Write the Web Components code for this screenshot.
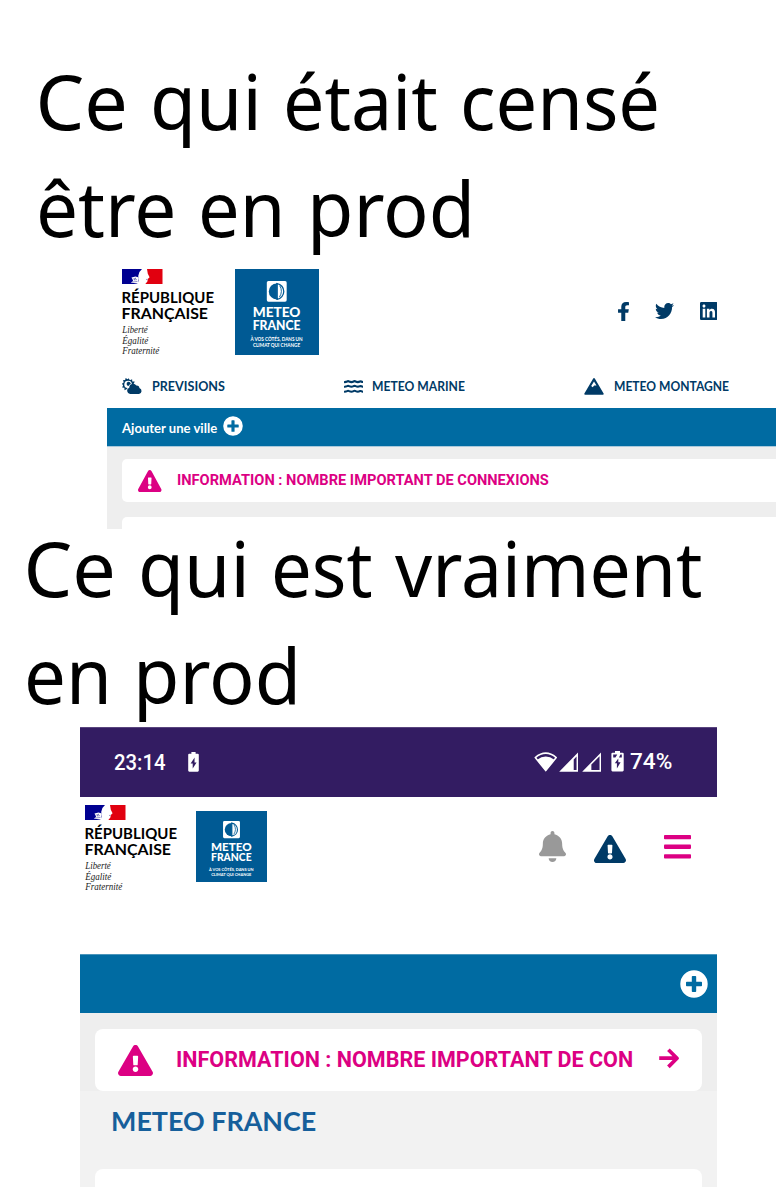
<!DOCTYPE html>
<html lang="fr">
<head>
<meta charset="utf-8">
<title>Météo France en prod</title>
<style>
html,body{margin:0;background:#fff}
body{width:776px;height:1187px;overflow:hidden;font-family:"Liberation Sans",sans-serif}
</style>
</head>
<body>
<prod-page></prod-page>
<script>
const define = (name, html, setup) => customElements.define(name, class extends HTMLElement {
  constructor() {
    super();
    const root = this.attachShadow({mode: 'open'});
    const t = document.createElement('template');
    t.innerHTML = html;
    root.append(t.content.cloneNode(true));
  }
  connectedCallback() { if (setup) setup.call(this); }
});

/* Single line of text stretched to an exact width (attribute w). */
define('fit-text', `<style>:host{display:block;flex:none;white-space:nowrap}span{display:inline-block;transform-origin:0 50%}</style><span><slot></slot></span>`,
function () {
  const s = this.shadowRoot.querySelector('span'), w = +this.getAttribute('w');
  this.style.width = w + 'px';
  s.style.transform = `scaleX(${w / s.offsetWidth})`;
});

const icons = {
  facebook: ['22 0 276 512', '<path d="M279.14 288l14.22-92.66h-88.91v-60.13c0-25.35 12.42-50.06 52.24-50.06h40.42V6.26S260.43 0 225.36 0c-73.22 0-121.08 44.38-121.08 124.72v70.62H22.89V288h81.39v224h100.17V288z"/>'],
  twitter: ['0 48 512 416', '<path d="M459.37 151.716c.325 4.548.325 9.097.325 13.645 0 138.72-105.583 298.558-298.558 298.558-59.452 0-114.68-17.219-161.137-47.106 8.447.974 16.568 1.299 25.34 1.299 49.055 0 94.213-16.568 130.274-44.832-46.132-.975-84.792-31.188-98.112-72.772 6.498.974 12.995 1.624 19.818 1.624 9.421 0 18.843-1.3 27.614-3.573-48.081-9.747-84.143-51.98-84.143-102.985v-1.299c13.969 7.797 30.214 12.67 47.431 13.319-28.264-18.843-46.781-51.005-46.781-87.391 0-19.492 5.197-37.36 14.294-52.954 51.655 63.675 129.3 105.258 216.365 109.807-1.624-7.797-2.599-15.918-2.599-24.04 0-57.828 46.782-104.934 104.934-104.934 30.213 0 57.502 12.67 76.67 33.137 23.715-4.548 46.456-13.32 66.599-25.34-7.798 24.366-24.366 44.833-46.132 57.827 21.117-2.273 41.584-8.122 60.426-16.243-14.292 20.791-32.161 39.308-52.628 54.253z"/>'],
  linkedin: ['0 32 448 448', '<path d="M416 32H31.9C14.3 32 0 46.5 0 64.3v383.4C0 465.5 14.3 480 31.9 480H416c17.6 0 32-14.5 32-32.3V64.3c0-17.8-14.4-32.3-32-32.3zM135.4 416H69V202.2h66.5V416zm-33.2-243c-21.3 0-38.5-17.3-38.5-38.5S80.9 96 102.2 96c21.2 0 38.5 17.3 38.5 38.5 0 21.3-17.2 38.5-38.5 38.5zm282.1 243h-66.4V312c0-24.8-.5-56.7-34.5-56.7-34.6 0-39.9 27-39.9 54.9V416h-66.4V202.2h63.7v29.2h.9c8.9-16.8 30.6-34.5 62.9-34.5 67.2 0 79.7 44.3 79.7 101.9V416z"/>'],
  warning: ['0 0 576 512', '<path d="M569.517 440.013C587.975 472.007 564.806 512 527.94 512H48.054c-36.937 0-59.999-40.055-41.577-71.987L246.423 23.985c18.467-32.009 64.72-31.951 83.154 0l239.94 416.028zM288 354c-25.405 0-46 20.595-46 46s20.595 46 46 46 46-20.595 46-46-20.595-46-46-46zm-43.673-165.346l7.418 136c.347 6.364 5.609 11.346 11.982 11.346h48.546c6.373 0 11.635-4.982 11.982-11.346l7.418-136c.375-6.874-5.098-12.654-11.982-12.654h-63.383c-6.884 0-12.356 5.78-11.981 12.654z"/>'],
  bell: ['0 0 448 512', '<path d="M224 512c35.32 0 63.97-28.65 63.97-64H160.03c0 35.35 28.65 64 63.97 64zm215.39-149.71c-19.32-20.76-55.47-51.99-55.47-154.29 0-77.7-54.48-139.9-127.94-155.16V32c0-17.67-14.32-32-31.98-32s-31.98 14.33-31.98 32v20.84C118.56 68.1 64.08 130.3 64.08 208c0 102.3-36.15 133.53-55.47 154.29-6 6.45-8.66 14.16-8.61 21.71.11 16.4 12.98 32 32.1 32h383.8c19.12 0 32-15.6 32.1-32 .05-7.55-2.61-15.27-8.61-21.71z"/>'],
  bars: ['0 0 27 24', '<rect width="27" height="4.3" rx=".8"/><rect y="9.6" width="27" height="4.3" rx=".8"/><rect y="19.3" width="27" height="4.3" rx=".8"/>'],
  plus: ['0 0 28 28', '<path fill-rule="evenodd" d="M14 .3a13.7 13.7 0 1 0 0 27.4A13.7 13.7 0 1 0 14 .3zM12.6 6h2.8q.8 0 .8.8v5h5q.8 0 .8.8v2.8q0 .8-.8.8h-5v5q0 .8-.8.8h-2.8q-.8 0-.8-.8v-5h-5q-.8 0-.8-.8v-2.8q0-.8.8-.8h5v-5q0-.8.8-.8z"/>'],
  arrow: ['0 0 21 21', '<path d="M1.2 10.2H18M10.4 1.7l8.6 8.6-8.6 8.6" fill="none" stroke="currentColor" stroke-width="3.7" stroke-linecap="butt" stroke-linejoin="round"/>'],
  cloudsun: ['0 0 20 17', '<path fill-rule="evenodd" d="M6.6.2l1.3 2 2.2-1 .2 2.4 2.4.1-.9 2.1-1.9.6a3.8 3.8 0 1 0-4.3 4l-1.1 1.1-2 1.1-.1-2.5-2.3-.3 1-2.2L0 5.9l1.8-1.4-.9-2.2 2.3-.2L3.6 0l2 1.2z"/><path d="M6 3.9a2.7 2.7 0 0 1 2.9 1.9c-1.2.4-1.9 1.3-2.3 2.5A2.3 2.3 0 0 1 6 3.9z"/><path d="M8.1 16.4a3.3 3.3 0 0 1-.8-6.4 3.8 3.8 0 0 1 7-2.2 2.6 2.6 0 0 1 3.1 2.6 3.1 3.1 0 0 1-.4 6z"/>'],
  waves: ['0 0 19 14', '<path d="M.6 2.1q1.4 0 2.4-.6 1.1-.7 2.2 0 1.1.6 2.2.6t2.1-.6q1.1-.7 2.2 0 1.1.6 2.1.6t2.1-.6q1.2-.3 2.5.5M.6 6.8q1.4 0 2.4-.6 1.1-.7 2.2 0 1.1.6 2.2.6t2.1-.6q1.1-.7 2.2 0 1.1.6 2.1.6t2.1-.6q1.2-.3 2.5.5M.6 11.7q1.4 0 2.4-.6 1.1-.7 2.2 0 1.1.6 2.2.6t2.1-.6q1.1-.7 2.2 0 1.1.6 2.1.6t2.1-.6q1.2-.3 2.5.5" fill="none" stroke="currentColor" stroke-width="2.1" stroke-linecap="round"/>'],
  mountain: ['0 0 20 17', '<path fill-rule="evenodd" d="M9.2.6q.8-1.1 1.6 0l8.8 14.8q.5 1.3-.8 1.4H1.2Q-.1 16.7.4 15.4zM10 3.4L7.2 8l1.5 1.2 1.5-1.7h2.3z"/>'],
  battery: ['0 0 11 20', '<path fill-rule="evenodd" d="M3.4 0h4.2v1.7h2.1q1.1 0 1.1 1.1v15.8q0 1.1-1.1 1.1H1.3q-1.1 0-1.1-1.1V2.8q0-1.1 1.1-1.1h2.1zM6.6 5.6l-4 6h2.1v5l3.9-6.1H6.5z"/>'],
  batterylevel: ['0 0 13 20', '<path fill-rule="evenodd" d="M4 0h5v1.6h2.5Q12.7 1.6 12.7 2.8v16q0 1.1-1.2 1.1h-10Q.4 19.9.4 18.8v-16q0-1.2 1.2-1.2H4zM2.2 3.4v3h2.2l1.9-3zM9.4 3.4L8 6.4h2.8v-3zM7.3 7.3L3.8 12h2.1v5l3.7-6H7.3z"/>'],
  wifi: ['0 0 24 20', '<path d="M1.3 5.6Q12-3.2 22.7 5.6L12 18.6z" fill="none" stroke="currentColor" stroke-width="1.6" stroke-linejoin="round"/><path d="M3.2 7.7Q12 1.4 20.8 7.7L12 19z"/>'],
  signal: ['0 0 20 20', '<path fill-rule="evenodd" d="M19.7.2V19.8H.2zM18 4.6l-2.9 3V18H18z"/>'],
  signalempty: ['0 0 20 20', '<path fill-rule="evenodd" d="M19.7.2V19.8H.2zM18 4.2L9.6 12.6V18H18z"/>']
};
define('ui-icon', `<style>:host{display:block;flex:none;line-height:0}svg{display:block;width:100%;height:100%;fill:currentColor}</style><svg preserveAspectRatio="none"></svg>`,
function () {
  const [box, body] = icons[this.getAttribute('name')];
  const svg = this.shadowRoot.querySelector('svg');
  svg.setAttribute('viewBox', box);
  svg.innerHTML = body;
  this.style.width = this.getAttribute('w') + 'px';
  this.style.height = this.getAttribute('h') + 'px';
});

define('republique-logo', `<style>:host{display:block;flex:none;width:94px;height:90px}svg{display:block;overflow:visible}
.b{font:700 14.6px Lato,sans-serif}.i{font:italic 9.6px "Liberation Serif",serif;fill:#222}</style>
<svg width="94" height="90"><path fill="#000091" d="M0 0h20l-2.6 3-1.2 3.9.8 4.6-1.8 3.5H0z"/><path fill="#e1000f" d="M25 0h15.5v15H23.3l2.1-2.6.4-2.3 1.8-1.9-1.8-3.4z"/>
<path fill="#fff" d="M9.5 8.5l4-1.1 3.3 1.1-.5 6.2-7.5-1.2 2.4-1.5z"/><path d="M10 10.5l4-1.5-2 2 3-.4M10.5 13l5-.6M24 10.5l1.5-.2" fill="none" stroke="#5555a8" stroke-width=".6"/>
<text class="b" x="-.5" y="33.6" textLength="92.5" lengthAdjust="spacingAndGlyphs">RÉPUBLIQUE</text>
<text class="b" x="-.5" y="49.8" textLength="86.5" lengthAdjust="spacingAndGlyphs">FRANÇAISE</text>
<text class="i" x=".3" y="64.3" textLength="25.5" lengthAdjust="spacingAndGlyphs">Liberté</text>
<text class="i" x=".3" y="74.8" textLength="26" lengthAdjust="spacingAndGlyphs">Égalité</text>
<text class="i" x=".3" y="84.9" textLength="37" lengthAdjust="spacingAndGlyphs">Fraternité</text></svg>`);

define('meteo-logo', `<style>:host{display:block;flex:none}svg{display:block;width:100%;height:100%;fill:#fff;background:#005a94}
.b{font:900 12.4px Lato,sans-serif}.s{font:700 5px Lato,sans-serif}</style>
<svg viewBox="0 0 84 85" preserveAspectRatio="none"><rect x="32" y="12" width="20" height="20.5" rx="1.6"/>
<path d="M42 14.3a8 8 0 0 0 0 16" fill="#005a94"/><path d="M42.4 14.5a7.9 7.9 0 0 1 0 15.6z" fill="#fff" stroke="#005a94" stroke-width="1.3"/><path d="M45 16.5q3.5 5.7-.3 11.5" fill="none" stroke="#005a94" stroke-width=".9"/><path d="M42 30.4V14" stroke="#005a94" stroke-width="1"/>
<text class="b" x="17.8" y="47.6" textLength="48" lengthAdjust="spacingAndGlyphs">METEO</text>
<text class="b" x="17.8" y="60.4" textLength="48" lengthAdjust="spacingAndGlyphs">FRANCE</text>
<text class="s" x="15.5" y="71.3" textLength="52.5" lengthAdjust="spacingAndGlyphs">À VOS CÔTÉS, DANS UN</text>
<text class="s" x="18" y="77.5" textLength="47.5" lengthAdjust="spacingAndGlyphs">CLIMAT QUI CHANGE</text></svg>`);

define('big-title', `<style>:host{display:block;box-sizing:border-box;height:214px;font:400 77.3px/107px "Noto Sans","Open Sans",sans-serif;color:#000}</style><slot></slot>`);

define('title-line', `<style>:host{display:flex;height:107px;gap:22px}</style><slot></slot>`);

define('nav-item', `<style>:host{display:flex;align-items:center;color:#003a66;font:700 12.4px/18px Lato,sans-serif}</style><slot></slot>`);

define('info-card', `<style>:host{display:flex;box-sizing:border-box;align-items:center;background:#fff;color:#dc0083;font-family:Roboto,sans-serif;font-weight:700}</style><slot></slot>`);

define('desktop-site', `<style>
:host{display:block;margin-left:107px;height:269px}
header{display:flex;height:109px;box-sizing:border-box;padding:9px 0 0 15px;color:#003a66}
meteo-logo{width:83.5px;height:85.5px;margin-left:19px}
.social{display:flex;align-items:center;height:85px;margin-left:299px}
.social ui-icon{margin-top:-1px}
.social ui-icon+ui-icon{margin-left:26px}
nav{display:grid;grid-template-columns:221.5px 240.5px 1fr;height:39px;padding:0 0 0 15px;box-sizing:border-box}
nav-item{height:35px}
.bar{display:flex;align-items:center;height:38px;padding-left:15px;background:#006ba2;color:#fff;font:700 12.8px/18px Lato,sans-serif}
main{height:83px;box-sizing:border-box;border-top:1px solid #a9c9dc;padding:12px 0 0 15px;background:#eee;overflow:hidden}
info-card{height:43px;padding-left:16px;border-radius:5px 0 0 5px;font-size:15px;line-height:18px}
info-card+info-card{margin-top:15px}
</style>
<header><republique-logo></republique-logo><meteo-logo></meteo-logo>
<div class="social"><ui-icon name="facebook" w="11" h="19"></ui-icon><ui-icon name="twitter" w="19" h="16"></ui-icon><ui-icon name="linkedin" w="17.5" h="18"></ui-icon></div></header>
<nav><nav-item><ui-icon name="cloudsun" w="20" h="16.5"></ui-icon><fit-text w="73" style="margin-left:9.5px;margin-top:1px">PREVISIONS</fit-text></nav-item>
<nav-item><ui-icon name="waves" w="19" h="14"></ui-icon><fit-text w="93" style="margin-left:9px;margin-top:1px">METEO MARINE</fit-text></nav-item>
<nav-item><ui-icon name="mountain" w="20" h="17"></ui-icon><fit-text w="115" style="margin-left:9.5px;margin-top:1px">METEO MONTAGNE</fit-text></nav-item></nav>
<div class="bar"><fit-text w="95" style="margin-top:1px">Ajouter une ville</fit-text><ui-icon name="plus" w="20" h="20" style="margin:-2px 0 0 6px"></ui-icon></div>
<main><info-card><ui-icon name="warning" w="23.5" h="22"></ui-icon><fit-text w="371.5" style="margin:-1px 0 0 15px">INFORMATION : NOMBRE IMPORTANT DE CONNEXIONS</fit-text></info-card><info-card></info-card></main>`);

define('status-bar', `<style>:host{display:flex;align-items:center;height:70px;padding:0 45.5px 0 34px;box-sizing:border-box;background:#331c62;color:#fff;font:500 21.5px/26px Roboto,sans-serif;border-top:1px solid #59457e}
ui-icon{margin-top:-1px}
.right{display:flex;align-items:center;margin:-1px 0 0 auto}</style>
<fit-text w="52">23:14</fit-text><ui-icon name="battery" w="11" h="20" style="margin-left:22px"></ui-icon>
<div class="right"><ui-icon name="wifi" w="23.5" h="20"></ui-icon><ui-icon name="signal" w="19.5" h="20" style="margin-left:1.5px"></ui-icon><ui-icon name="signalempty" w="19.5" h="20" style="margin-left:3.5px"></ui-icon><ui-icon name="batterylevel" w="13" h="20.5" style="margin-left:10px"></ui-icon><fit-text w="42" style="margin-left:5.5px">74%</fit-text></div>`);

define('phone-site', `<style>
:host{display:block;width:637px;height:460px;margin-left:80px;overflow:hidden}
header{display:flex;height:157px;box-sizing:border-box;padding:7.5px 0 0 4.5px}
meteo-logo{width:71px;height:71px;margin:6px 0 0 17.5px}
.tools{display:flex;align-items:flex-start;margin:26px 26px 0 auto}
.bar{display:flex;align-items:center;justify-content:flex-end;box-sizing:border-box;height:59px;padding-right:9px;border-top:1px solid #4b95bb;background:#006ba2;color:#fff}
.alert{height:78px;box-sizing:border-box;padding:16px 15px 0;background:#eee}
info-card{height:62px;border-radius:8px;padding:0 23px 0 23px;font-size:21.5px;line-height:26px}
main{height:96px;background:#f2f2f2;padding:0 15px;box-sizing:border-box}
h2{margin:0;height:78px;box-sizing:border-box;padding:13px 0 0 16px;font:700 26.6px/34px Lato,sans-serif;color:#165f9b}
main info-card{padding:0}
</style>
<status-bar></status-bar>
<header><republique-logo></republique-logo><meteo-logo></meteo-logo>
<div class="tools"><ui-icon name="bell" w="27" h="31" style="color:#999"></ui-icon><ui-icon name="warning" w="32" h="28" style="color:#003a66;margin:4px 0 0 28px"></ui-icon><ui-icon name="bars" w="27" h="24" style="color:#dc0083;margin:4px 0 0 38px"></ui-icon></div></header>
<div class="bar"><ui-icon name="plus" w="28" h="28"></ui-icon></div>
<div class="alert"><info-card><ui-icon name="warning" w="35" h="31"></ui-icon><fit-text w="457" style="margin-left:23px">INFORMATION : NOMBRE IMPORTANT DE CON</fit-text><ui-icon name="arrow" w="21" h="21" style="margin:-3px 0 0 auto"></ui-icon></info-card></div>
<main><h2><fit-text w="205">METEO FRANCE</fit-text></h2><info-card></info-card></main>`);

define('prod-page', `<style>:host{display:block;width:776px;height:1187px;overflow:hidden;background:#fff}
.one{margin-top:46px}.two{margin-top:-16px}
big-title{position:relative;top:1px}
.one title-line{padding-left:35.5px}.two title-line{padding-left:23.5px}
</style>
<div style="display:flow-root"><big-title class="one"><title-line><fit-text w="92">Ce</fit-text><fit-text w="111.5">qui</fit-text><fit-text w="155">était</fit-text><fit-text w="200">censé</fit-text></title-line>
<title-line><fit-text w="140">être</fit-text><fit-text w="87">en</fit-text><fit-text w="168">prod</fit-text></title-line></big-title></div>
<desktop-site></desktop-site>
<big-title class="two"><title-line><fit-text w="92">Ce</fit-text><fit-text w="111.5">qui</fit-text><fit-text w="102">est</fit-text><fit-text w="308">vraiment</fit-text></title-line>
<title-line><fit-text w="87.5">en</fit-text><fit-text w="168">prod</fit-text></title-line></big-title>
<phone-site></phone-site>`);
</script>
</body>
</html>
